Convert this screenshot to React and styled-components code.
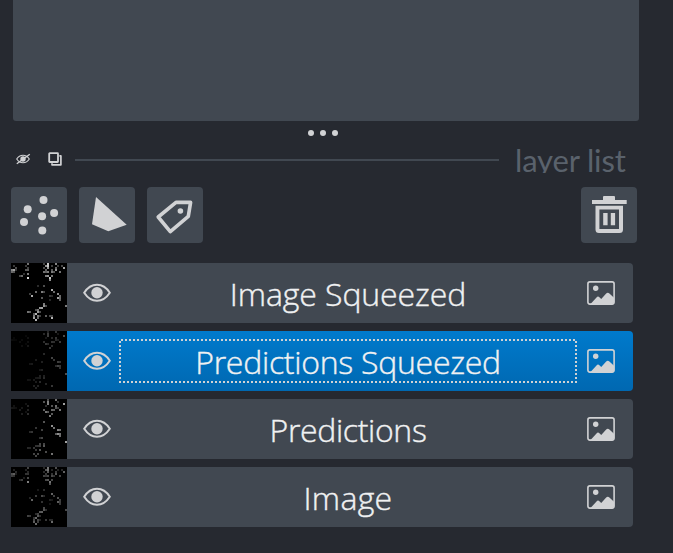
import React from "react";
import styled, { createGlobalStyle, css } from "styled-components";

const color = {
  background: "#262930",
  foreground: "#414851",
  muted: "#5a626c",
  icon: "#d1d2d4",
  text: "#f0f1f2",
};

const GlobalStyle = createGlobalStyle`
  * { box-sizing: border-box; }
  body { margin: 0; background: ${color.background}; overflow: hidden; }
  svg { display: block; flex: none; }
`;

const Window = styled.main`
  width: 673px;
  height: 553px;
  display: flex;
  flex-direction: column;
  background: ${color.background};
  color: ${color.text};
  font-family: "Open Sans", "Noto Sans", sans-serif;
`;

const ControlsPanel = styled.section`
  height: 121px;
  margin: 0 34px 0 13px;
  background: ${color.foreground};
  border-radius: 0 0 3px 3px;
`;

const Splitter = styled.div`
  height: 24px;
  display: flex;
  justify-content: center;
  align-items: center;
  gap: 6px;
  padding-right: 27px;
`;

const Dot = styled.span`
  width: 6px;
  height: 6px;
  border-radius: 50%;
  background: ${color.icon};
`;

const TitleBar = styled.header`
  height: 28px;
  display: flex;
  align-items: center;
  padding: 0 0 0 15px;
  overflow: hidden;
`;

const TitleButton = styled.button`
  width: 16px;
  height: 16px;
  padding: 0;
  margin-right: ${(p) => p.$after}px;
  border: 0;
  background: none;
`;

const Rule = styled.div`
  width: 424px;
  height: 2px;
  margin-top: 2px;
  background: ${color.foreground};
`;

const Title = styled.h2`
  margin: 0 0 0 16px;
  height: 28px;
  font-family: Lato, "Open Sans", sans-serif;
  font-size: 31px;
  font-weight: 400;
  line-height: 31px;
  letter-spacing: -0.15px;
  color: ${color.muted};
  white-space: nowrap;
`;

const Toolbar = styled.div`
  display: flex;
  gap: 12px;
  margin: 14px 36px 0 11px;
`;

const ToolButton = styled.button`
  width: 56px;
  height: 56px;
  padding: 0;
  border: 0;
  border-radius: 4px;
  background: ${color.foreground};
  margin-left: ${(p) => (p.$end ? "auto" : 0)};
`;

const LayerList = styled.ul`
  list-style: none;
  display: flex;
  flex-direction: column;
  gap: 8px;
  margin: 20px 40px 0 11px;
  padding: 0;
`;

const LayerRow = styled.li`
  height: 60px;
  display: flex;
  align-items: center;
  border-radius: 4px;
  padding-right: 18px;
  background: ${(p) =>
    p.$selected ? "linear-gradient(#007acc, #0068b1)" : color.foreground};
`;

const EyeButton = styled.button`
  width: 28px;
  height: 20px;
  padding: 0;
  border: 0;
  margin: 0 8px 0 16px;
  background: none;
`;

const dash = (direction) =>
  `repeating-linear-gradient(${direction}, ${color.icon} 0 2px, transparent 2px 4px)`;

const focusRing = css`
  background-image: ${dash("to right")}, ${dash("to right")},
    ${dash("to bottom")}, ${dash("to bottom")};
  background-size: 456px 2px, 458px 2px, 2px 40px, 2px 40px;
  background-position: 2px 0, 0 42px, 0 2px, 456px 2px;
  background-repeat: no-repeat;
`;

const LayerName = styled.span`
  width: 458px;
  height: 44px;
  margin-right: 10px;
  font-size: 32px;
  font-weight: 300;
  line-height: 45px;
  text-align: center;
  letter-spacing: ${(p) => p.$tracking}px;
  -webkit-text-stroke: 0.4px ${color.text};
  white-space: nowrap;
  ${(p) => p.$selected && focusRing}
`;

const brightCells = [
  [1, 1, 60], [0, 3, 140], [1, 3, 170], [0, 4, 110], [1, 4, 90], [2, 2, 80], [2, 3, 50],
  [4, 6, 75], [5, 6, 110], [6, 5, 55], [7, 1, 60], [8, 0, 120], [8, 2, 70], [7, 3, 90],
  [8, 3, 95], [8, 5, 130], [8, 7, 230], [16, 0, 70], [17, 1, 150], [18, 0, 210],
  [18, 1, 210], [18, 2, 160], [16, 2, 80], [17, 3, 100], [16, 4, 120], [17, 4, 100],
  [18, 4, 130], [20, 1, 65], [20, 3, 90], [20, 4, 130], [21, 4, 90], [22, 0, 140],
  [22, 2, 110], [22, 3, 155], [23, 1, 60], [24, 4, 120], [26, 2, 175], [25, 1, 75],
  [17, 6, 130], [18, 6, 155], [19, 7, 210], [20, 6, 125], [19, 8, 150], [13, 11, 45],
  [16, 11, 80], [20, 13, 180], [21, 14, 110], [12, 14, 110], [15, 14, 130], [16, 14, 75],
  [10, 16, 180], [9, 15, 65], [15, 17, 90], [19, 16, 60], [20, 16, 45], [23, 15, 145],
  [24, 16, 110], [24, 18, 100], [23, 17, 170], [24, 17, 110], [19, 18, 40], [27, 21, 130],
  [16, 20, 130], [16, 21, 150], [17, 21, 80], [14, 22, 160], [15, 22, 170], [13, 23, 120],
  [12, 23, 80], [8, 24, 120], [9, 24, 100], [13, 24, 160], [14, 24, 80], [11, 25, 90],
  [12, 25, 190], [11, 26, 130], [13, 26, 125], [11, 27, 170], [12, 28, 190], [13, 27, 110],
  [14, 26, 65], [17, 26, 100], [19, 26, 75], [20, 27, 190], [20, 26, 70],
];

const sparseCells = [
  [1, 3, 24], [0, 4, 28], [1, 4, 25], [4, 5, 35], [5, 4, 30], [5, 7, 38], [2, 4, 20],
  [7, 2, 25], [8, 3, 48], [8, 5, 42], [8, 7, 60], [7, 6, 22], [16, 1, 110], [18, 0, 100],
  [18, 1, 170], [18, 2, 170], [17, 3, 60], [16, 5, 125], [17, 6, 155], [18, 6, 110],
  [20, 3, 110], [20, 5, 140], [21, 5, 125], [22, 0, 150], [22, 3, 145], [22, 4, 115],
  [23, 4, 80], [24, 5, 160], [26, 2, 210], [23, 1, 65], [20, 7, 120], [19, 8, 160],
  [16, 11, 110], [20, 13, 190], [21, 14, 150], [12, 14, 70], [15, 15, 85], [10, 16, 70],
  [9, 16, 55], [23, 15, 170], [24, 15, 145], [22, 17, 120], [23, 17, 190], [24, 17, 150],
  [24, 18, 140], [27, 21, 215], [14, 19, 60], [15, 19, 90], [16, 22, 90], [16, 23, 115],
  [14, 22, 90], [14, 23, 85], [13, 23, 70], [12, 23, 65], [11, 24, 70], [8, 24, 52],
  [9, 24, 48], [12, 25, 75], [14, 25, 110], [11, 27, 90], [13, 27, 95], [12, 28, 95],
  [17, 26, 100], [20, 27, 150],
];

const layers = [
  { name: "Image Squeezed", cells: brightCells, level: 0.95, tracking: -0.1 },
  { name: "Predictions Squeezed", cells: sparseCells, level: 0.36, tracking: -0.27, selected: true },
  { name: "Predictions", cells: sparseCells, level: 0.75, tracking: -0.35 },
  { name: "Image", cells: brightCells, level: 0.55, tracking: 0.3 },
];

function Thumbnail({ cells, level }) {
  return (
    <svg width="56" height="60" viewBox="0 0 28 30" shapeRendering="crispEdges">
      <rect width="28" height="30" fill="#000" />
      {cells.map(([x, y, v]) => {
        const c = Math.round(v * level);
        return <rect key={`${x}-${y}`} x={x} y={y} width="1" height="1" fill={`rgb(${c},${c},${c})`} />;
      })}
    </svg>
  );
}

function EyeIcon() {
  return (
    <svg width="28" height="20" viewBox="0 0 28 20">
      <path
        d="M1.2 9.8C4.6 4.4 8.8 1.8 14 1.8S23.4 4.4 26.8 9.8C23.4 15 19.2 17.8 14 17.8S4.6 15 1.2 9.8Z"
        fill="none"
        stroke={color.icon}
        strokeWidth="2"
      />
      <circle cx="14" cy="9.8" r="5.7" fill={color.icon} />
    </svg>
  );
}

function HiddenEyeIcon() {
  return (
    <svg width="16" height="16" viewBox="0 0 16 16">
      <path
        d="M1.7 8C3.4 5.3 5.6 4.2 8 4.2S12.6 5.3 14.3 8C12.6 10.7 10.4 11.8 8 11.8S3.4 10.7 1.7 8Z"
        fill="none"
        stroke={color.icon}
        strokeWidth="1.1"
      />
      <circle cx="8" cy="8" r="2.7" fill={color.icon} />
      <path d="M1.8 12.8L14.8 3.2" stroke={color.icon} strokeWidth="1.4" />
    </svg>
  );
}

function StackIcon() {
  return (
    <svg width="16" height="16" viewBox="0 0 16 16" fill="none" stroke={color.icon}>
      <path d="M12.4 4.9H13.9V13.8H5V12.2" strokeWidth="1.7" strokeLinejoin="round" />
      <rect x="2.2" y="2.2" width="8.8" height="8.8" rx=".5" strokeWidth="1.8" />
    </svg>
  );
}

function PointsIcon() {
  const points = [[32.5, 13], [16.7, 22.3], [43.1, 26], [31.1, 29.3], [13, 35], [31.3, 43.4]];
  return (
    <svg width="56" height="56" fill={color.icon}>
      {points.map(([x, y]) => (
        <circle key={`${x}-${y}`} cx={x} cy={y} r="4" />
      ))}
    </svg>
  );
}

function ShapeIcon() {
  return (
    <svg width="56" height="56">
      <path d="M17 10L47.7 37.7L29.3 44.3L13 37.2Z" fill={color.icon} />
    </svg>
  );
}

function TagIcon() {
  return (
    <svg width="56" height="56">
      <path
        d="M29 15.4H43.6L41.3 29.4L23.3 44.6L11.2 30Z"
        fill="none"
        stroke={color.icon}
        strokeWidth="3.6"
        strokeLinejoin="round"
      />
      <circle cx="33.4" cy="24" r="2.8" fill={color.icon} />
    </svg>
  );
}

function TrashIcon() {
  return (
    <svg width="56" height="56" fill={color.icon}>
      <path d="M11 13H22V10Q22 9 23 9H33Q34 9 34 10V13H45.7V17H11Z" />
      <path fillRule="evenodd" d="M14.5 18.8H42V42.5Q42 46 38.5 46H18Q14.5 46 14.5 42.5ZM18.4 22.4V42H38V22.4Z" />
      <path d="M22.2 26H26.6V38.2H22.2ZM29.8 26H34.1V38.2H29.8Z" />
    </svg>
  );
}

function ImageIcon() {
  return (
    <svg width="28" height="24" viewBox="0 0 28 24">
      <rect x=".9" y=".9" width="26.2" height="22.2" rx="2" fill="none" stroke={color.icon} strokeWidth="1.6" />
      <circle cx="8.7" cy="7.3" r="2.7" fill={color.icon} />
      <path
        d="M3.5 23L9.5 16.4Q11 14.7 12.4 16.3L14.2 18L19.2 12.6Q20.8 10.9 22.4 12.6L27 16.8V21Q27 23 25 23Z"
        fill={color.icon}
      />
    </svg>
  );
}

export default function App() {
  return (
    <Window>
      <GlobalStyle />
      <ControlsPanel />
      <Splitter>
        <Dot />
        <Dot />
        <Dot />
      </Splitter>
      <TitleBar>
        <TitleButton $after={16} aria-label="Hide dock"><HiddenEyeIcon /></TitleButton>
        <TitleButton $after={12} aria-label="Float dock"><StackIcon /></TitleButton>
        <Rule />
        <Title>layer list</Title>
      </TitleBar>
      <Toolbar>
        <ToolButton aria-label="New points layer"><PointsIcon /></ToolButton>
        <ToolButton aria-label="New shapes layer"><ShapeIcon /></ToolButton>
        <ToolButton aria-label="New labels layer"><TagIcon /></ToolButton>
        <ToolButton $end aria-label="Delete layer"><TrashIcon /></ToolButton>
      </Toolbar>
      <LayerList>
        {layers.map(({ name, cells, level, tracking, selected }) => (
          <LayerRow key={name} $selected={selected}>
            <Thumbnail cells={cells} level={level} />
            <EyeButton aria-label="Toggle visibility"><EyeIcon /></EyeButton>
            <LayerName $selected={selected} $tracking={tracking}>{name}</LayerName>
            <ImageIcon />
          </LayerRow>
        ))}
      </LayerList>
    </Window>
  );
}
